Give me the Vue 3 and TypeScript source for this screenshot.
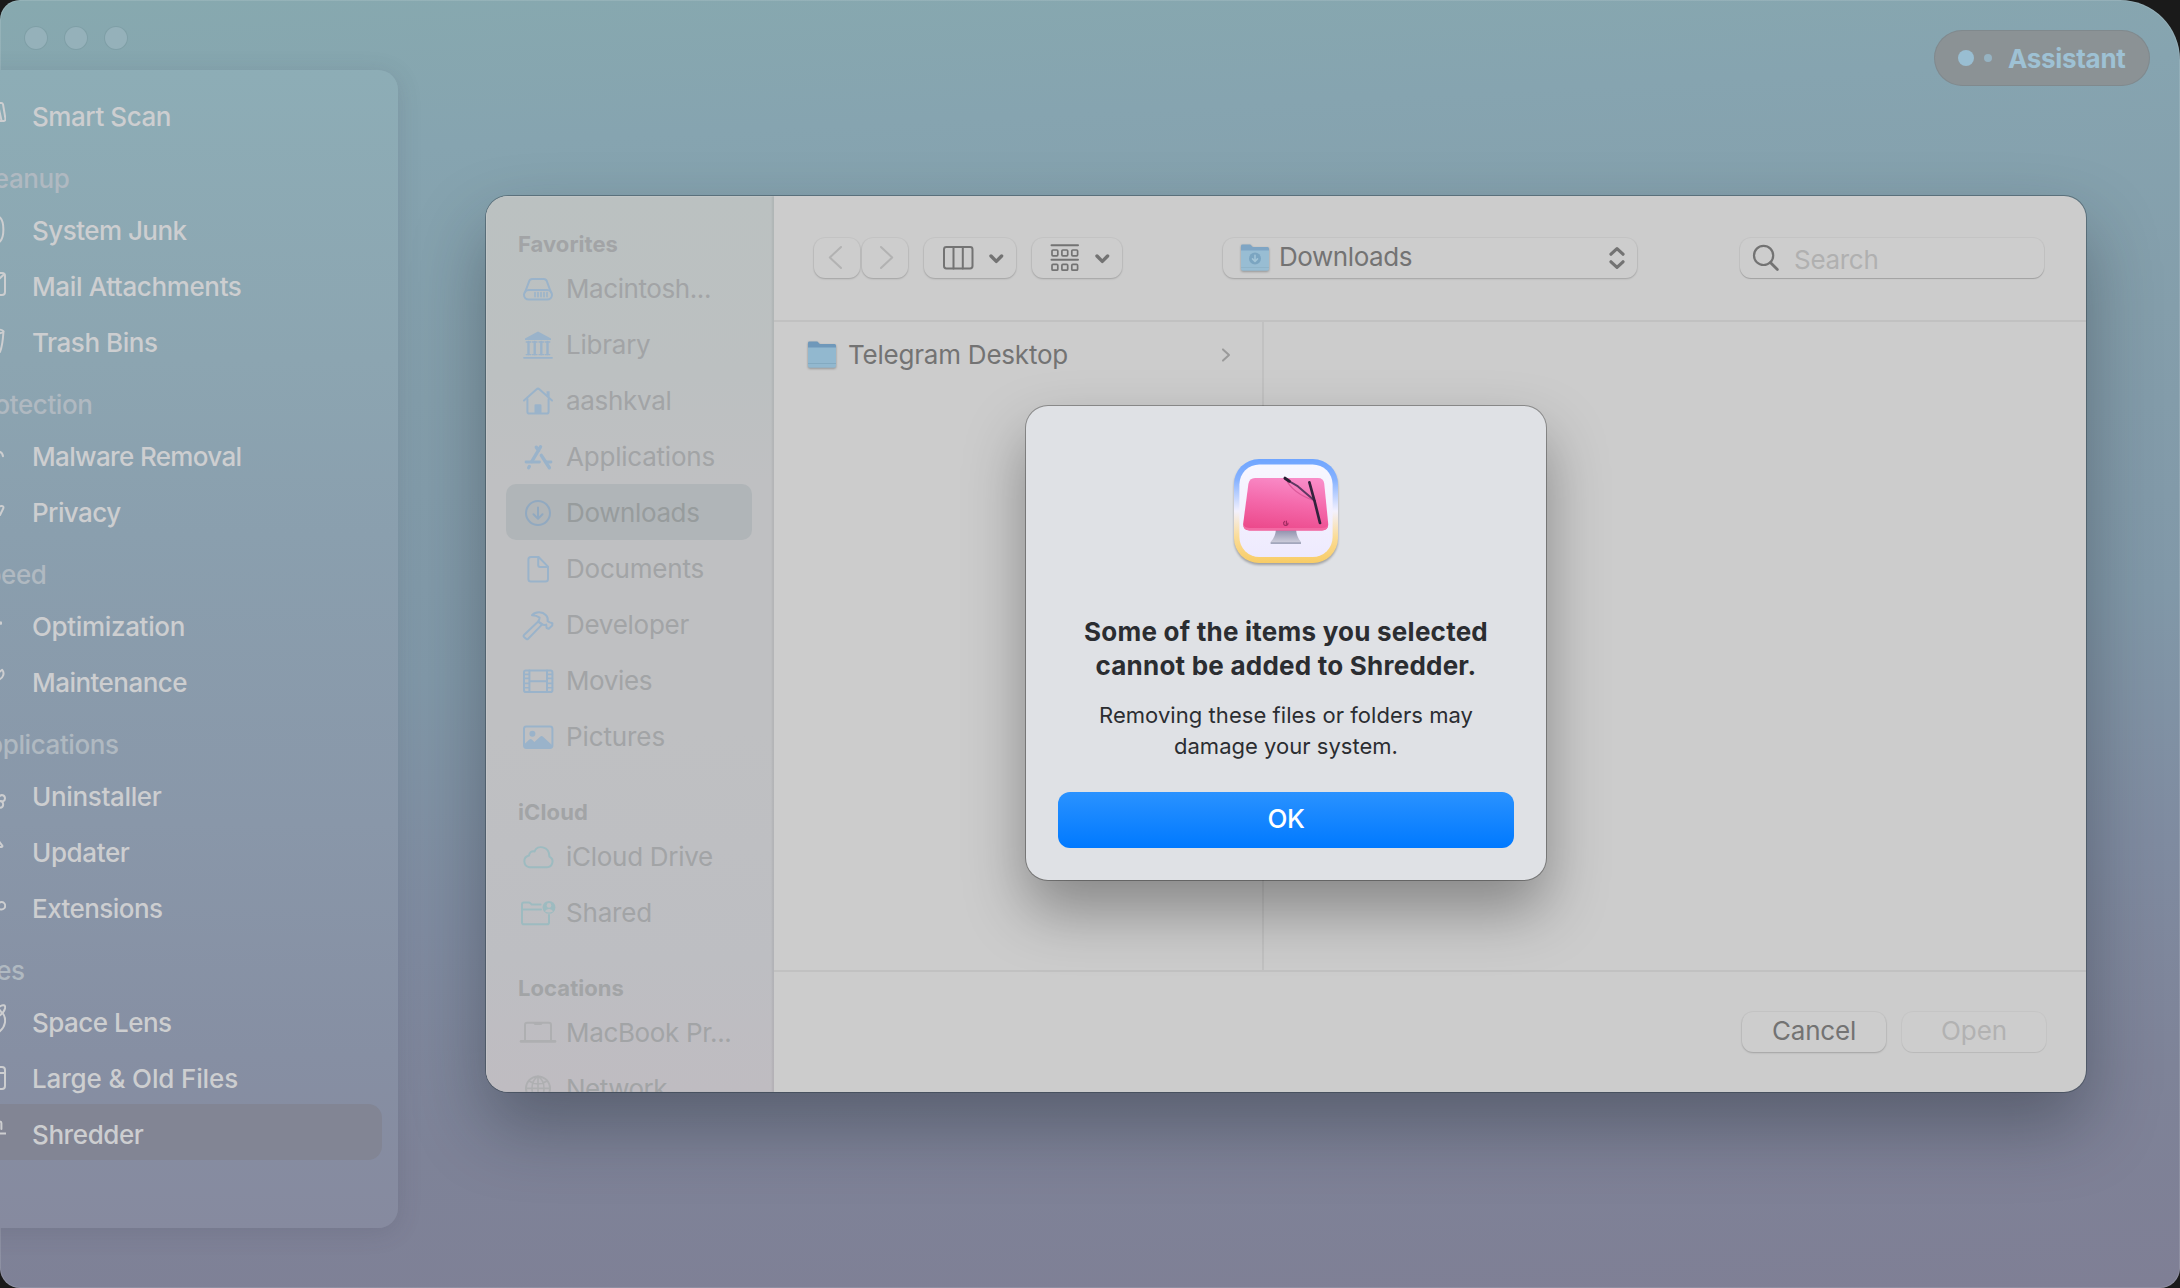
<script setup lang="ts">
import type { Directive } from 'vue'

interface NavItem { label: string; width: number; paths: string[] }
interface NavSection { title?: string; items: NavItem[] }
interface Place { label: string; width: number; icon: string; tone?: string; active?: boolean }
interface PlaceSection { title: string; width: number; items: Place[] }

// Tracks a label so that it fills the given width on a single line.
const vFit: Directive<HTMLElement, number> = {
  mounted(el, binding) {
    el.style.letterSpacing = '0px'
    const natural = el.getBoundingClientRect().width
    const count = (el.textContent ?? '').trim().length
    el.style.letterSpacing = `${((binding.value - natural) / count).toFixed(3)}px`
  },
}

const sections: NavSection[] = [
  {
    items: [
      { label: 'Smart Scan', width: 139, paths: ['M5 5H27.5Q28.6 5 29 6.2L31.4 20.5Q31.6 23 29.5 23H3', 'M25 11L27.5 22.5'] },
    ],
  },
  {
    title: 'Cleanup',
    items: [
      { label: 'System Junk', width: 154.5, paths: ['M26 5.5C30.5 10 30.5 25 26 29.5'] },
      { label: 'Mail Attachments', width: 209.5, paths: ['M3 5H28Q31 5 31 8V24Q31 27 28 27H3', 'M30.2 6.2L20 16'] },
      { label: 'Trash Bins', width: 125.5, paths: ['M20 5C28 5.4 29.6 6.2 29.6 7.4C29 9 26 9.6 20 10', 'M29.4 8.2C28.9 16 28 23 26 28'] },
    ],
  },
  {
    title: 'Protection',
    items: [
      { label: 'Malware Removal', width: 209.5, paths: ['M22 13.5C26 13 28.4 15 29 18.2'] },
      { label: 'Privacy', width: 88.5, paths: ['M25 12.6C28 11.4 30 12 29.3 14.3L26 21'] },
    ],
  },
  {
    title: 'Speed',
    items: [
      { label: 'Optimization', width: 153, paths: ['M26.6 14.6V15.6', 'M27 14.4V15.8'] },
      { label: 'Maintenance', width: 155, paths: ['M24 9L28.2 5.8C30.5 8.5 30 14.5 24 15.8'] },
    ],
  },
  {
    title: 'Applications',
    items: [
      { label: 'Uninstaller', width: 129.5, paths: ['M25 19C27 15.6 31 17.4 31 20.4C31 23 28 24 26 23', 'M26 23C30 23 30.4 29.5 26 29.8'] },
      { label: 'Updater', width: 97.5, paths: ['M24 6L28.4 11.8Q28.6 12.8 27.4 12.9H20'] },
      { label: 'Extensions', width: 130.5, paths: ['M23.8 15.8A3.7 3.7 0 1 1 31.2 15.8A3.7 3.7 0 1 1 23.8 15.8'] },
    ],
  },
  {
    title: 'Files',
    items: [
      { label: 'Space Lens', width: 139.5, paths: ['M25 3C29 0 32 1 31 4.5C30.4 7 28.5 9.5 25 12', 'M28.6 9C33 15 31.5 23 25 28', 'M25 5L28 9'] },
      { label: 'Large & Old Files', width: 206, paths: ['M3 7H28Q31 7 31 10V26Q31 29 28 29H3', 'M3 13H31'] },
      { label: 'Shredder', width: 111.5, paths: ['M24 5.5H26Q27.4 5.5 27.4 7V13', 'M0 17.4H32'] },
    ],
  },
]

const places: PlaceSection[] = [
  {
    title: 'Favorites', width: 100,
    items: [
      { label: 'Macintosh...', width: 145, icon: 'drive' },
      { label: 'Library', width: 84.5, icon: 'library' },
      { label: 'aashkval', width: 105.5, icon: 'home' },
      { label: 'Applications', width: 149, icon: 'apps' },
      { label: 'Downloads', width: 133.5, icon: 'download', active: true },
      { label: 'Documents', width: 138, icon: 'document' },
      { label: 'Developer', width: 123, icon: 'hammer' },
      { label: 'Movies', width: 86, icon: 'film' },
      { label: 'Pictures', width: 99, icon: 'picture' },
    ],
  },
  {
    title: 'iCloud', width: 70,
    items: [
      { label: 'iCloud Drive', width: 147, icon: 'cloud', tone: 'teal' },
      { label: 'Shared', width: 86, icon: 'shared', tone: 'teal' },
    ],
  },
  {
    title: 'Locations', width: 106,
    items: [
      { label: 'MacBook Pr...', width: 165.5, icon: 'laptop', tone: 'gray' },
      { label: 'Network', width: 101, icon: 'globe', tone: 'gray' },
    ],
  },
]
</script>

<template>
  <div class="screen">
    <div class="window">
      <div class="lights"><i></i><i></i><i></i></div>

      <nav class="nav">
        <section v-for="(s, i) in sections" :key="i">
          <h3 v-if="s.title" class="nav-title">{{ s.title }}</h3>
          <div v-for="item in s.items" :key="item.label" class="nav-row" :class="{ active: item.label === 'Shredder' }">
            <svg class="nav-icon" viewBox="0 0 32 32"><path v-for="p in item.paths" :key="p" :d="p" /></svg>
            <span v-fit="item.width" class="nav-label">{{ item.label }}</span>
          </div>
        </section>
      </nav>

      <div class="assistant">
        <i class="dot big"></i><i class="dot small"></i>
        <span v-fit="117.5">Assistant</span>
      </div>
    </div>

    <div class="sheet">
      <aside class="places">
        <section v-for="s in places" :key="s.title">
          <h4 class="place-title"><span v-fit="s.width">{{ s.title }}</span></h4>
          <div v-for="p in s.items" :key="p.label" class="place" :class="[p.tone, { active: p.active }]">
            <svg class="place-icon" viewBox="0 0 38 32">
              <template v-if="p.icon === 'drive'">
                <path d="M6 19.5L10.2 8.2Q11 6 13.2 6H24.8Q27 6 27.8 8.2L32 19.5" />
                <rect x="5" y="17" width="28" height="9.6" rx="4.8" />
                <path d="M16 19.6v4.2M19 19.6v4.2M22 19.6v4.2M25 19.6v4.2M28 19.6v4.2" stroke-width="1.6" />
              </template>
              <template v-else-if="p.icon === 'library'">
                <path class="solid" d="M19 2.5L32 9.5V11H6V9.5Z" />
                <path d="M9.5 13v12M15.7 13v12M22.3 13v12M28.5 13v12" stroke-width="2.4" />
                <path d="M7.2 13h4.6M13.4 13H18M20 13h4.6M26.2 13h4.6M7.2 25.6h4.6M13.4 25.6H18M20 25.6h4.6M26.2 25.6h4.6" stroke-width="1.3" />
                <path d="M5 28.8H33" stroke-width="1.8" />
              </template>
              <template v-else-if="p.icon === 'home'">
                <path d="M5 15.6L17.6 4.3Q19 3 20.4 4.3L33 15.6" />
                <path d="M8.4 14V26.4Q8.4 28.6 10.6 28.6H27.4Q29.6 28.6 29.6 26.4V14" />
                <path class="solid" d="M15.5 28.5V20.5Q15.5 19.3 16.7 19.3H21.3Q22.5 19.3 22.5 20.5V28.5ZM27.6 6.2H30.6V12.5L27.6 10Z" />
              </template>
              <template v-else-if="p.icon === 'apps'">
                <path d="M17.3 6.2L19.6 9.6M21.5 5.8L12.8 20.5M22.3 14.4L30.4 26.8" stroke-width="3.4" />
                <path d="M7 21H20.5M26.5 21H32" stroke-width="2.8" />
                <path d="M10.4 25.4L9.6 26.8" stroke-width="3.2" />
              </template>
              <template v-else-if="p.icon === 'download'">
                <circle cx="19" cy="16" r="12" />
                <path d="M19 10.4V21.4M14.5 17.2L19 21.7L23.5 17.2" />
              </template>
              <template v-else-if="p.icon === 'document'">
                <path d="M12 4H19.6L29 13.6V26Q29 28.6 26.4 28.6H12Q9.4 28.6 9.4 26V6.6Q9.4 4 12 4Z" />
                <path d="M19.2 4.4V12Q19.2 14 21.2 14H28.6" />
              </template>
              <template v-else-if="p.icon === 'hammer'">
                <path d="M19.2 12.6L5 26Q4.2 27 5 27.9L7.4 30Q8.3 30.7 9.2 29.8L23.2 15.4Z" />
                <path d="M13 6.2C17 2 23.5 2.6 27 6.2C29 8.2 29.2 9.6 28.6 12.2L30.8 13.4L33.4 14.2L33.2 16.6L29.8 19.8L27.6 19L27.2 15.6Q25 16.6 23.2 15.4L19.2 12.6Q20.6 10.4 20.6 8.6Q17.6 6.2 13 6.2Z" />
              </template>
              <template v-else-if="p.icon === 'film'">
                <rect x="5" y="5.4" width="28.4" height="21.6" rx="1.8" />
                <path d="M10.4 5.4V27M28 5.4V27M10.4 16.2H28" />
                <path d="M5 9.4h5M5 13.4h5M5 18.4h5M5 22.8h5M28.4 9.4h5M28.4 13.4h5M28.4 18.4h5M28.4 22.8h5" stroke-width="1.6" />
              </template>
              <template v-else-if="p.icon === 'picture'">
                <rect x="5" y="5.4" width="28.4" height="21.6" rx="2.4" />
                <circle class="solid" cx="13.4" cy="12.8" r="3" />
                <path class="solid" d="M5 23.4L10.4 18.4Q11.6 17.4 12.8 18.4L15.4 21L21.4 15.6Q22.6 14.6 23.8 15.6L33 24V26.6H5Z" />
              </template>
              <template v-else-if="p.icon === 'cloud'">
                <path d="M10.4 26.2H27.6A5.6 5.6 0 0 0 30.4 15.6C30.4 5 18 3.4 15.6 10.4Q10.8 9.6 10 14.6A5.9 5.9 0 0 0 10.4 26.2Z" />
              </template>
              <template v-else-if="p.icon === 'shared'">
                <path d="M30 18V25.4Q30 27.2 28.2 27.2H4.8Q3 27.2 3 25.4V7.4Q3 5.6 4.8 5.6H9.6Q10.8 5.6 11.8 6.6L12.8 7.6H21.6M3 12.4H22" />
                <circle class="solid" cx="30" cy="10.4" r="6.4" />
                <circle class="hole" cx="30" cy="8.4" r="2.3" />
                <path class="hole" d="M25.8 14.2Q30 9.8 34.2 14.2Q30 16.8 25.8 14.2Z" />
              </template>
              <template v-else-if="p.icon === 'laptop'">
                <path d="M6 23V8Q6 5.8 8.2 5.8H29.8Q32 5.8 32 8V23" />
                <path d="M2 24.4H36" stroke-width="2.6" />
                <path d="M16 6.6H22" stroke-width="2.6" />
              </template>
              <template v-else>
                <circle cx="19" cy="15.4" r="12" />
                <path d="M19 3.4V27.4M7 15.4H31M10 8Q19 14 28 8M10 22.8Q19 17 28 22.8M19 3.4C11 8 11 22.8 19 27.4M19 3.4C27 8 27 22.8 19 27.4" stroke-width="1.6" />
              </template>
            </svg>
            <span v-fit="p.width">{{ p.label }}</span>
          </div>
        </section>
      </aside>

      <div class="browser">
        <header class="toolbar">
          <div class="control arrow">
            <svg viewBox="0 0 46 40"><path d="M27 9L15.8 19.5L27 30" /></svg>
          </div>
          <div class="control arrow next">
            <svg viewBox="0 0 46 40"><path d="M19 9L30.2 19.5L19 30" /></svg>
          </div>
          <div class="control view">
            <svg viewBox="0 0 92 40">
              <rect x="20" y="9" width="28.5" height="21.5" rx="2.4" /><path d="M29.5 9V30.5M38.8 9V30.5" />
              <path d="M67 18L72.3 23.4L77.6 18" stroke-width="3.4" />
            </svg>
          </div>
          <div class="control group">
            <svg viewBox="0 0 90 40">
              <path d="M19.5 7.3H46M19.5 21.8H46" />
              <g stroke-width="1.7">
                <rect x="20" y="12" width="5.8" height="5.8" rx="1" /><rect x="29.9" y="12" width="5.8" height="5.8" rx="1" /><rect x="39.8" y="12" width="5.8" height="5.8" rx="1" />
                <rect x="20" y="26.4" width="5.8" height="5.8" rx="1" /><rect x="29.9" y="26.4" width="5.8" height="5.8" rx="1" /><rect x="39.8" y="26.4" width="5.8" height="5.8" rx="1" />
              </g>
              <path d="M65 18L70.3 23.4L75.6 18" stroke-width="3.4" />
            </svg>
          </div>
          <div class="control popup">
            <svg class="folder" viewBox="0 0 30 28">
              <path fill="#7fa5c4" d="M1 2Q1 .6 2.4 .6H10.4L12.8 3H27.6Q29 3 29 4.6V10H1Z" />
              <path fill="#98bdd3" d="M1 6.6H29V25Q29 26.8 27.2 26.8H2.8Q1 26.8 1 25Z" />
              <path fill="#8db1c7" d="M1 23.2H29V24H1Z" />
              <circle cx="15" cy="14.4" r="6" fill="#7ba5c1" />
              <path d="M15 11.2V17M12.5 14.9L15 17.3L17.5 14.9" fill="none" stroke="#a2c4d7" stroke-width="1.6" />
            </svg>
            <span v-fit="133">Downloads</span>
            <svg class="updown" viewBox="0 0 16 24"><path d="M2 8.2L8 2.6L14 8.2M2 15.8L8 21.4L14 15.8" /></svg>
          </div>
          <div class="control search">
            <svg viewBox="0 0 28 28"><circle cx="11.6" cy="11.4" r="9.6" /><path d="M18.4 18.4L25.4 25.4" stroke-width="2.8" /></svg>
            <span v-fit="84.5">Search</span>
          </div>
        </header>

        <div class="columns">
          <div class="column">
            <div class="entry">
              <svg class="folder" viewBox="0 0 30 28">
                <path fill="#6f98ba" stroke="none" d="M1 2Q1 .6 2.4 .6H10.4L12.8 3H27.6Q29 3 29 4.6V10H1Z" />
                <path fill="#92b8cf" stroke="none" d="M1 6.6H29V25Q29 26.8 27.2 26.8H2.8Q1 26.8 1 25Z" />
                <path fill="#7fa6be" stroke="none" d="M1 22H29V22.8H1Z" />
              </svg>
              <span v-fit="220">Telegram Desktop</span>
              <svg class="more" viewBox="0 0 10 16"><path d="M2 2.4L8 8L2 13.6" /></svg>
            </div>
          </div>
          <div class="column rest"></div>
        </div>

        <footer class="actions">
          <button class="control"><span v-fit="84">Cancel</span></button>
          <button class="control off"><span v-fit="66">Open</span></button>
        </footer>
      </div>
    </div>

    <div class="alert">
      <svg class="app-icon" viewBox="0 0 104 104">
        <defs>
          <linearGradient id="rim" x1="0" y1="0" x2="0" y2="1">
            <stop offset="0" stop-color="#6fa5ff" /><stop offset=".2" stop-color="#86b2ff" />
            <stop offset=".5" stop-color="#f3f1fe" /><stop offset=".75" stop-color="#fbdc97" /><stop offset="1" stop-color="#f8cc66" />
          </linearGradient>
          <linearGradient id="plate" x1="0" y1="0" x2="0" y2="1">
            <stop offset="0" stop-color="#f8f7ff" /><stop offset="1" stop-color="#eeeafe" />
          </linearGradient>
          <linearGradient id="glass" x1=".6" y1="0" x2=".4" y2="1">
            <stop offset="0" stop-color="#f98cc8" /><stop offset=".5" stop-color="#f468aa" /><stop offset="1" stop-color="#ec4a8c" />
          </linearGradient>
          <linearGradient id="foot" x1="0" y1="0" x2="0" y2="1">
            <stop offset="0" stop-color="#8a8ba8" /><stop offset=".85" stop-color="#c9c9d8" /><stop offset="1" stop-color="#8087a0" />
          </linearGradient>
        </defs>
        <rect x="0" y="0" width="104" height="104" rx="25" fill="url(#rim)" />
        <rect x="5.4" y="5.4" width="93.2" height="92.6" rx="20" fill="url(#plate)" />
        <path d="M42 70H62Q62.5 78 67 83V84.8H36.6V83Q41.5 78 42 70Z" fill="url(#foot)" />
        <path d="M21 19H84Q89.4 19 90.2 24.5L94.2 64.5Q94.6 71.4 88 71.4H15.6Q8.6 71.4 9.2 64.5L14.4 25Q15.4 19 21 19Z" fill="url(#glass)" />
        <path d="M9.4 66Q10 71.4 15.6 71.4H88Q94 71.4 94.2 66Q93 69 88 69H15.6Q11 69 9.4 66Z" fill="#f36aa4" />
        <path d="M52 20Q58 34 81 42" fill="none" stroke="#dd5b9b" stroke-width="1.2" />
        <path d="M51.5 20L64 27.4L81 42" fill="none" stroke="#5f3862" stroke-width="2" />
        <path d="M51 19.2L55.4 22.2" fill="none" stroke="#281f33" stroke-width="3" />
        <path d="M75.4 23.4L80.8 43L86 64" fill="none" stroke="#33233d" stroke-width="2.7" />
        <path d="M50.6 62.4A2.2 2.2 0 1 0 54 64M52.4 62.2V65" fill="none" stroke="#a32d63" stroke-width="1.2" />
      </svg>
      <h2><span v-fit="404">Some of the items you selected</span><br /><span v-fit="381">cannot be added to Shredder.</span></h2>
      <p><span v-fit="374">Removing these files or folders may</span><br /><span v-fit="224">damage your system.</span></p>
      <button class="ok"><span v-fit="37">OK</span></button>
    </div>
  </div>
</template>

<style>
html, body { margin: 0; background: #1a1a1a; overflow: hidden; }
</style>

<style scoped>
* { box-sizing: border-box; }
.screen {
  position: relative;
  width: 2180px;
  height: 1288px;
  overflow: hidden;
  background: #1a1a1a;
  font-family: Inter, "Liberation Sans", sans-serif;
  font-size: 26px;
  line-height: 32px;
  white-space: nowrap;
}
span { display: inline-block; }
svg { display: block; flex: none; fill: none; stroke-linecap: round; stroke-linejoin: round; }

.window {
  display: grid;
  grid-template: 70px 1fr / 1fr auto;
  height: 1288px;
  overflow: hidden;
  border-radius: 20px 60px 20px 20px;
  background: linear-gradient(177deg, #87a9af 0%, #86a4b0 12%, #849eab 30%, #8198a8 50%, #7f8ba0 68%, #7e8398 84%, #7f7f95 100%);
  box-shadow: inset 0 0 0 1px rgba(255, 255, 255, .12);
}
.lights { display: flex; gap: 18px; padding: 27px 0 0 25px; }
.lights i { width: 22px; height: 22px; border-radius: 50%; background: #95b1ba; box-shadow: 0 0 0 1px rgba(70, 100, 110, .12); }

.nav {
  grid-area: 2 / 1;
  width: 446px;
  height: 1158px;
  margin-left: -48px;
  padding-top: 16px;
  border-radius: 20px;
  background: linear-gradient(#8dadb6, #8ca5b1 25%, #8a9fae 40%, #8997a9 65%, #868fa3 85%, #868a9f);
  box-shadow: 0 4px 24px rgba(60, 65, 80, .16);
}
.nav-title {
  height: 58px;
  margin: 0;
  padding: 21px 0 0 17px;
  font-size: 26px;
  font-weight: 500;
  letter-spacing: -.4px;
  line-height: 32px;
  color: #b0b9c1;
}
.nav-row {
  display: flex;
  align-items: center;
  gap: 26px;
  width: 430px;
  height: 56px;
  padding-left: 22px;
  border-radius: 14px;
  color: #cdced0;
  font-weight: 500;
}
.nav-row.active { background: #828594; }
.nav-icon { width: 32px; height: 32px; stroke: #cdced0; stroke-width: 2; }
.nav-label { padding-top: 5px; }

.assistant {
  grid-area: 1 / 2;
  display: flex;
  align-items: center;
  width: 216px;
  height: 56px;
  margin: 30px 30px 0 0;
  padding-left: 24px;
  border-radius: 28px;
  background: #8b9295;
  color: #9ec1d4;
  font-weight: 700;
  box-shadow: inset 0 0 0 1px rgba(70, 90, 100, .15);
}
.assistant span { padding-top: 2px; }
.dot { border-radius: 50%; background: #99bed2; }
.dot.big { width: 16px; height: 16px; }
.dot.small { width: 8px; height: 8px; margin: 0 16px 0 10px; opacity: .75; }

.sheet {
  position: absolute;
  left: 486px;
  top: 196px;
  display: flex;
  width: 1600px;
  height: 896px;
  overflow: hidden;
  border-radius: 22px;
  background: #ccc;
  box-shadow: 0 0 0 1px rgba(40, 55, 65, .42), 0 34px 70px rgba(25, 30, 40, .36);
}
.places {
  flex: none;
  width: 288px;
  height: 896px;
  overflow: hidden;
  padding-left: 20px;
  background: linear-gradient(#bbc1c1, #bcc0c1 20%, #bfc0c2 32%, #bfc0c2 60%, #bdbec2 85%, #bfbcc1);
  box-shadow: inset -2px 0 2px rgba(0, 0, 0, .06), inset 1px 1px 0 rgba(255, 255, 255, .12);
  color: #a2a4a6;
}
.place-title {
  display: flex;
  align-items: flex-end;
  height: 64px;
  margin: 0;
  padding-left: 12px;
  font-size: 22px;
  font-weight: 700;
  line-height: 32px;
}
.place {
  display: flex;
  align-items: center;
  gap: 9px;
  width: 246px;
  height: 56px;
  padding: 2px 0 0 13px;
  border-radius: 10px;
  --tone: #9ab3ca;
}
.place.teal { --tone: #9dbbc0; }
.place.gray { --tone: #aeafb1; }
.place.active { background: #b0b5b8; color: #979c9d; --tone: #91a9c0; }
.place-icon { width: 38px; height: 32px; stroke: var(--tone); stroke-width: 2; }
.place-icon .solid { fill: var(--tone); stroke: none; }
.place-icon .hole { fill: #bebfc2; stroke: none; }

.browser { display: flex; flex: 1; flex-direction: column; color: #737373; }
.toolbar {
  display: flex;
  flex: none;
  align-items: flex-start;
  height: 126px;
  padding: 42px 0 0 40px;
  border-bottom: 2px solid #c1c1c1;
}
.control {
  display: flex;
  align-items: center;
  height: 40px;
  border-radius: 11px;
  background: #cdcdcd;
  box-shadow: 0 0 0 1px rgba(0, 0, 0, .03), 0 1px 2px rgba(0, 0, 0, .18);
}
.control svg { stroke: #737373; stroke-width: 2; }
.arrow svg { width: 46px; height: 40px; stroke: #b2b2b2; }
.arrow { margin-right: 2px; }
.next { margin-right: 16px; }
.view, .view svg { width: 92px; height: 40px; }
.view { margin-right: 16px; }
.group, .group svg { width: 90px; height: 40px; }
.popup { width: 414px; margin-left: 101px; padding-left: 17px; }
.folder { width: 30px; height: 28px; filter: drop-shadow(0 1px 1px rgba(0, 0, 0, .3)); }
.popup .folder { stroke: none; }
.popup span { margin: -2px auto 0 9px; }
.popup .updown { width: 16px; height: 24px; margin-right: 12px; stroke-width: 3.2; }
.search { width: 304px; margin-left: 103px; padding-left: 12px; box-shadow: 0 0 0 1px rgba(0, 0, 0, .04), 0 1px 1px rgba(0, 0, 0, .18); }
.search svg { width: 28px; height: 28px; stroke-width: 2.2; }
.search span { margin: 3px 0 0 14px; color: #b0b0b0; }

.columns { display: flex; flex: 1; }
.column { width: 490px; border-right: 2px solid #c1c1c1; }
.column.rest { flex: 1; border: 0; }
.entry { display: flex; align-items: center; height: 56px; margin-top: 5px; padding-left: 33px; }
.entry span { margin: 0 auto 0 11px; }
.more { width: 10px; height: 16px; margin-right: 31px; stroke: #9a9a9a; stroke-width: 2; }

.actions {
  display: flex;
  flex: none;
  gap: 16px;
  justify-content: flex-end;
  height: 122px;
  padding: 40px 40px 0 0;
  border-top: 2px solid #c1c1c1;
}
.actions .control { justify-content: center; width: 144px; padding: 0 0 3px; border: 0; color: #737373; font: inherit; }
.actions .off { color: #b2b2b2; box-shadow: 0 0 0 1px rgba(0, 0, 0, .03), 0 1px 1px rgba(0, 0, 0, .06); }

.alert {
  position: absolute;
  left: 1026px;
  top: 406px;
  display: flex;
  flex-direction: column;
  align-items: center;
  width: 520px;
  height: 474px;
  padding: 53px 32px 32px;
  border-radius: 22px;
  background: #dfe1e5;
  color: #2b2d31;
  box-shadow: 0 0 0 1px rgba(0, 0, 0, .3), 0 30px 60px rgba(0, 0, 0, .34);
}
.app-icon { width: 104px; height: 104px; filter: drop-shadow(0 2px 1px rgba(0, 0, 0, .28)); }
.alert h2 { margin: 52px 0 0; font-size: 26px; font-weight: 700; line-height: 34px; text-align: center; }
.alert p { margin: 17px 0 0; font-size: 22px; line-height: 31px; text-align: center; }
.ok {
  display: flex;
  align-items: center;
  justify-content: center;
  width: 456px;
  height: 56px;
  margin-top: auto;
  padding: 0 0 3px;
  border: 0;
  border-radius: 12px;
  background: linear-gradient(#2a92ff, #0079ff);
  color: #fff;
  font: 500 26px/32px Inter, sans-serif;
}
</style>
